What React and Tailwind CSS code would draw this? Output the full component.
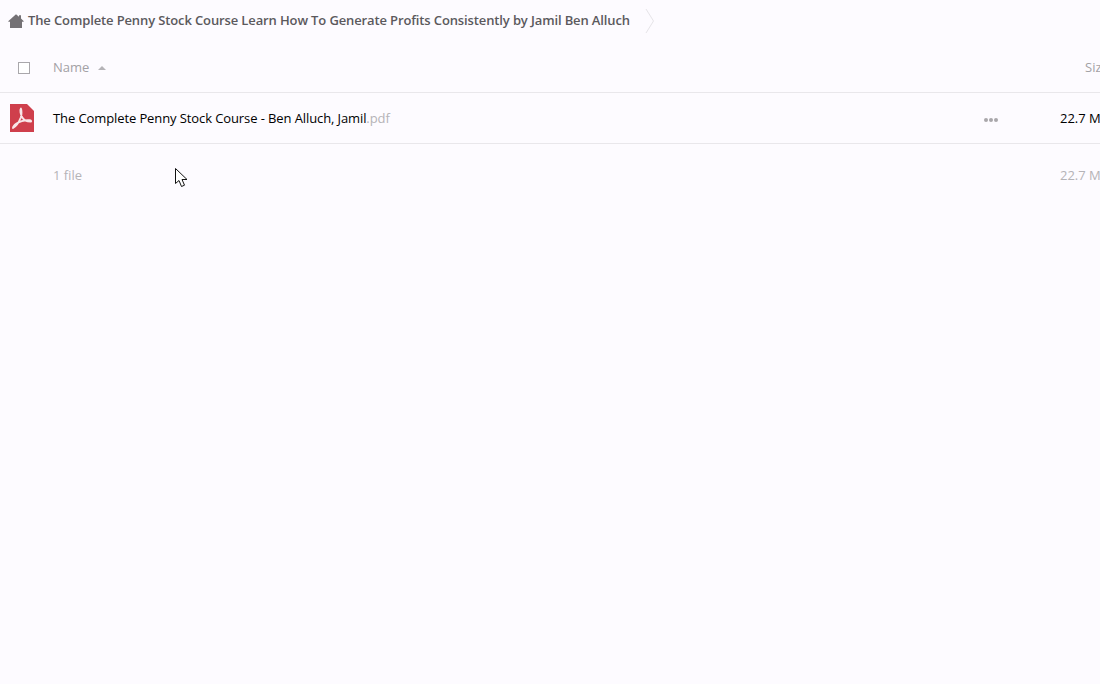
import React from 'react';

const HomeIcon = () => (
  <svg width="16" height="14" viewBox="0 0 16 14" className="shrink-0">
    <path d="M8 0.3 L11 2.8 V1.2 H13 V4.6 L15.8 7.2 L15.5 7.8 H14 V14 H2 V7.8 H0.5 L0.2 7.2 Z" fill="#747175" />
  </svg>
);

const PdfIcon = () => (
  <svg width="24" height="28" viewBox="0 0 24 28" className="shrink-0">
    <path d="M0 0 H17 L24 7 V28 H0 Z" fill="#cf3f4c" />
    <path
      d="M3 24 C6 22.5 9 18 10.8 13.5 C11.8 10.5 11.6 6 10.9 4.6 C9.8 5.8 10.6 10.5 12.3 13.5 C14 16.4 16.5 17.6 20.5 17.6 C21.7 17.6 21.2 16.4 19.5 16.3 C15.5 16 9.5 17.6 6.5 19.6 C4.5 21 3 22.6 3 24 Z"
      fill="none"
      stroke="#f8e6e8"
      strokeWidth="1.9"
      strokeLinejoin="round"
    />
  </svg>
);

const Cursor = () => (
  <svg width="14" height="20" viewBox="0 0 14 20" className="absolute left-[175px] top-[168px]">
    <path
      d="M0.5 0.5 V15.5 L4 12.5 L6.5 18.5 L9.5 17.2 L7 11.5 H12 Z"
      fill="#fff"
      stroke="#111"
      strokeWidth="1"
      strokeLinejoin="miter"
    />
  </svg>
);

const App = () => {
  return (
    <div
      className="relative h-[684px] w-[1100px] overflow-hidden bg-[#fdfbff] text-[13px]"
      style={{ fontFamily: '"Open Sans", sans-serif' }}
    >
      {/* breadcrumb */}
      <div className="box-border flex h-[44px] items-center pb-[3px]">
        <div className="ml-2 flex items-center gap-1">
          <HomeIcon />
          <span className="font-semibold tracking-[-0.125px] whitespace-nowrap text-[#5b595d]">
            The Complete Penny Stock Course Learn How To Generate Profits Consistently by Jamil Ben Alluch
          </span>
        </div>
        <svg width="10" height="26" viewBox="0 0 10 26" className="ml-[15px] shrink-0">
          <path d="M1 1 L8.5 13 L1 25" fill="none" stroke="#e6e4e8" strokeWidth="1" />
        </svg>
      </div>

      {/* table */}
      <div className="w-[1140px]">
        <div className="flex h-[49px] items-center border-b border-[#e9e7eb]">
          <div className="flex w-[53px] shrink-0 justify-center pr-[5px]">
            <div className="h-3 w-3 border border-[#a9a7ab] bg-white" />
          </div>
          <span className="text-[#a3a1a5]">Name</span>
          <span className="ml-[9px] h-0 w-0 border-x-4 border-b-4 border-x-transparent border-b-[#b5b3b7]" />
          <span className="ml-auto w-[55px] text-[#a3a1a5]">Size</span>
        </div>

        <div className="flex h-[51px] items-center border-b border-[#e9e7eb]">
          <div className="flex w-[53px] shrink-0 pl-[10px]">
            <PdfIcon />
          </div>
          <span className="mt-[2px] tracking-[-0.1px] whitespace-nowrap text-black">
            The Complete Penny Stock Course - Ben Alluch, Jamil
            <span className="text-[#b5b3b7]">.pdf</span>
          </span>
          <div className="mt-[3px] ml-auto flex gap-[1px]">
            <span className="h-1 w-1 rounded-full bg-[#a9a7ab]" />
            <span className="h-1 w-1 rounded-full bg-[#a9a7ab]" />
            <span className="h-1 w-1 rounded-full bg-[#a9a7ab]" />
          </div>
          <span className="mt-[2px] ml-[62px] w-[80px] text-black">22.7 MB</span>
        </div>

        <div className="flex h-[63px] items-center">
          <span className="pl-[53px] text-[#b5b3b7]">1 file</span>
          <span className="ml-auto w-[80px] text-[#b5b3b7]">22.7 MB</span>
        </div>
      </div>

      <Cursor />
    </div>
  );
};

export default App;
